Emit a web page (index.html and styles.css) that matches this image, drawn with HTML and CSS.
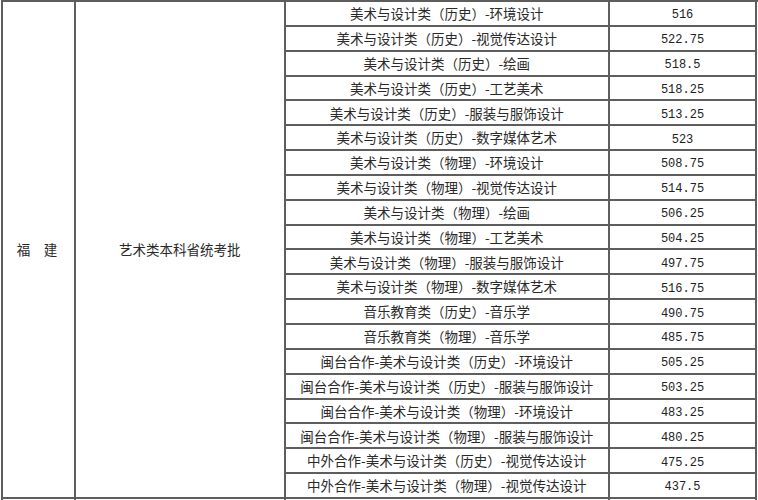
FILE: index.html
```html
<!DOCTYPE html>
<html lang="zh-CN">
<head>
<meta charset="utf-8">
<title>福建 艺术类本科省统考批</title>
<link rel="stylesheet" href="styles.css">
</head>
<body>
<div class="sheet">
  <div class="cell prov">福　建</div>
  <div class="cell batch">艺术类本科省统考批</div>
  <div class="cell major">美术与设计类（历史）-环境设计</div><div class="cell score">516</div>
  <div class="cell major">美术与设计类（历史）-视觉传达设计</div><div class="cell score">522.75</div>
  <div class="cell major">美术与设计类（历史）-绘画</div><div class="cell score">518.5</div>
  <div class="cell major">美术与设计类（历史）-工艺美术</div><div class="cell score">518.25</div>
  <div class="cell major">美术与设计类（历史）-服装与服饰设计</div><div class="cell score">513.25</div>
  <div class="cell major">美术与设计类（历史）-数字媒体艺术</div><div class="cell score">523</div>
  <div class="cell major">美术与设计类（物理）-环境设计</div><div class="cell score">508.75</div>
  <div class="cell major">美术与设计类（物理）-视觉传达设计</div><div class="cell score">514.75</div>
  <div class="cell major">美术与设计类（物理）-绘画</div><div class="cell score">506.25</div>
  <div class="cell major">美术与设计类（物理）-工艺美术</div><div class="cell score">504.25</div>
  <div class="cell major">美术与设计类（物理）-服装与服饰设计</div><div class="cell score">497.75</div>
  <div class="cell major">美术与设计类（物理）-数字媒体艺术</div><div class="cell score">516.75</div>
  <div class="cell major">音乐教育类（历史）-音乐学</div><div class="cell score">490.75</div>
  <div class="cell major">音乐教育类（物理）-音乐学</div><div class="cell score">485.75</div>
  <div class="cell major">闽台合作-美术与设计类（历史）-环境设计</div><div class="cell score">505.25</div>
  <div class="cell major">闽台合作-美术与设计类（历史）-服装与服饰设计</div><div class="cell score">503.25</div>
  <div class="cell major">闽台合作-美术与设计类（物理）-环境设计</div><div class="cell score">483.25</div>
  <div class="cell major">闽台合作-美术与设计类（物理）-服装与服饰设计</div><div class="cell score">480.25</div>
  <div class="cell major">中外合作-美术与设计类（历史）-视觉传达设计</div><div class="cell score">475.25</div>
  <div class="cell major">中外合作-美术与设计类（物理）-视觉传达设计</div><div class="cell score">437.5</div>
  <div class="cell"></div><div class="cell"></div><div class="cell"></div><div class="cell"></div>
</div>
</body>
</html>
```
FILE: styles.css
```css
html, body {
  margin: 0;
  padding: 0;
  background: #fff;
  overflow: hidden;
}

.sheet {
  margin-left: 1px;
  display: grid;
  grid-template-columns: 73px 209.5px 324.5px 147px;
  grid-template-rows: repeat(21, 24.85px);
  border-left: 2px solid #5e5e5e;
  border-top: 2px solid #5e5e5e;
  font-family: "Noto Sans CJK SC", "Noto Sans CJK JP", sans-serif;
  font-size: 13.5px;
  color: #2a2a2a;
}

.cell {
  box-sizing: border-box;
  border-right: 2px solid #5e5e5e;
  border-bottom: 2px solid #5e5e5e;
  display: flex;
  align-items: center;
  justify-content: center;
  white-space: nowrap;
  line-height: 1;
  padding-top: 1px;
}

.prov {
  grid-row: 1 / span 20;
  padding-right: 3px;
}

.batch {
  grid-row: 1 / span 20;
}

.score {
  font-family: "Liberation Mono", monospace;
  font-size: 12px;
  color: #222;
  padding-top: 4px;
}
```
